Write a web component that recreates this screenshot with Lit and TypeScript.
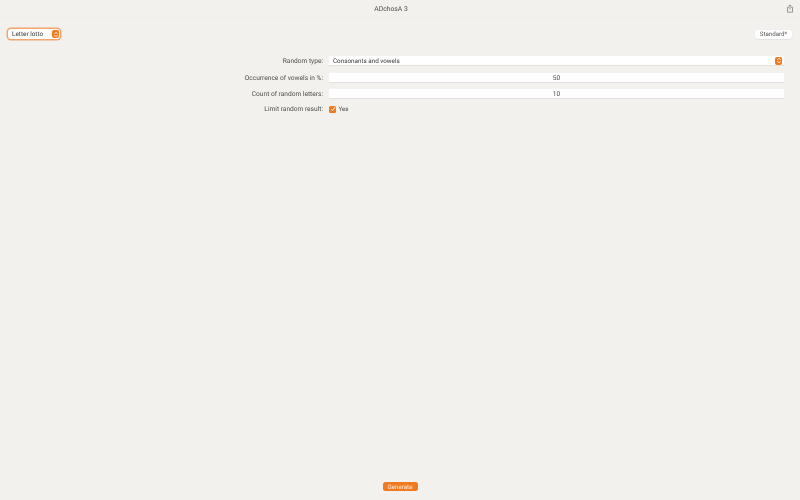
import { LitElement, html, css } from "lit";
import { customElement } from "lit/decorators.js";

const stepper = html`<svg viewBox="0 0 9 9" width="6" height="7"><path d="M2 3.4 4.5 1.2 7 3.4M2 5.6 4.5 7.8 7 5.6" fill="none" stroke="#fff" stroke-width="1.2"/></svg>`;

@customElement("app-root")
export class AppRoot extends LitElement {
  static styles = css`
    :host { display: block; width: 800px; height: 500px; background: #f3f1ee; overflow: hidden; }
    .page { display: flex; flex-direction: column; width: 800px; height: 500px; font-family: Roboto, "Liberation Sans", sans-serif; font-size: 6.6px; text-rendering: geometricPrecision; color: #3c3c3a; filter: blur(0.25px); }
    .title { flex: none; height: 18px; display: flex; align-items: center; justify-content: center; position: relative; border-bottom: 1px solid #efedea; box-sizing: border-box; color: #4c4c4a; font-size: 6.8px; }
    .title span { margin-right: 18px; }
    .share { position: absolute; right: 7px; top: 4px; }
    .top { display: flex; justify-content: space-between; align-items: center; padding: 11px 8px 0 8px; height: 10px; line-height: 11px; }
    .popup { display: flex; align-items: center; justify-content: space-between; width: 52px; height: 10px; box-sizing: border-box; padding: 0 1px 0 4px; background: #fff; border-radius: 3px; box-shadow: 0 0 0 1.5px #f2a66e; color: #333331; font-size: 6.4px; }
    .step { width: 7px; height: 8px; border-radius: 2px; background: #f07a20; display: flex; align-items: center; justify-content: center; }
    .std { height: 9px; width: 37px; box-sizing: border-box; display: flex; align-items: center; justify-content: center; background: #fff; border-radius: 3px; box-shadow: 0 0.5px 1px #d8d6d3; color: #5a5a58; font-size: 6.2px; }
    .form { display: grid; grid-template-columns: 323px 455px; column-gap: 6px; margin-top: 17px; grid-auto-rows: min-content; }
    .label { text-align: right; align-self: center; color: #4c4c46; }
    .field { height: 9px; background: #fff; box-sizing: border-box; box-shadow: 0 1px 0 #e4e2df; display: flex; align-items: center; }
    .select { justify-content: space-between; padding: 0 2px 0 4px; color: #3a3a38; margin-bottom: 8px; font-size: 6.3px; }
    .num { justify-content: center; color: #4a4a48; margin-bottom: 7px; }
    .last { margin-bottom: 6px; }
    .check { display: flex; align-items: center; gap: 2.5px; height: 10px; color: #4a4a48; font-size: 6.2px; }
    .box { width: 7px; height: 7px; border-radius: 1.5px; background: #f07a20; display: flex; align-items: center; justify-content: center; }
    .spacer { flex: 1; }
    .foot { display: flex; justify-content: center; padding-bottom: 9px; }
    .gen { width: 35px; height: 9px; border-radius: 2.5px; background: #f07a20; color: #ffe9d8; font-size: 6.2px; display: flex; align-items: center; justify-content: center; }
    .r1 { margin-bottom: 8px; }
    .r2 { margin-bottom: 7px; }
    .r3 { margin-bottom: 6px; }
  `;
  render() {
    return html`
      <div class="page">
      <div class="title"><span>ADchosA 3</span>
        <svg class="share" width="6" height="9" viewBox="0 0 6 9" fill="none" stroke="#7d7d7a" stroke-width=".8"><path d="M2 3.2H.5v5h5v-5H4M3 5.5V1M1.8 2 3 .8 4.2 2"/></svg>
      </div>
      <div class="top">
        <div class="popup"><span>Letter lotto</span><span class="step">${stepper}</span></div>
        <div class="std">Standard*</div>
      </div>
      <div class="form">
        <div class="label r1">Random type:</div>
        <div class="field select"><span>Consonants and vowels</span><span class="step">${stepper}</span></div>
        <div class="label r2">Occurrence of vowels in %:</div>
        <div class="field num">50</div>
        <div class="label r3">Count of random letters:</div>
        <div class="field num last">10</div>
        <div class="label">Limit random result:</div>
        <div class="check"><span class="box"><svg width="6" height="6" viewBox="0 0 6 6"><path d="M1.2 3 2.6 4.5 4.9 1.3" fill="none" stroke="#fff" stroke-width="1"/></svg></span>Yes</div>
      </div>
      <div class="spacer"></div>
      <div class="foot"><div class="gen">Generate</div></div>
      </div>
    `;
  }
}
